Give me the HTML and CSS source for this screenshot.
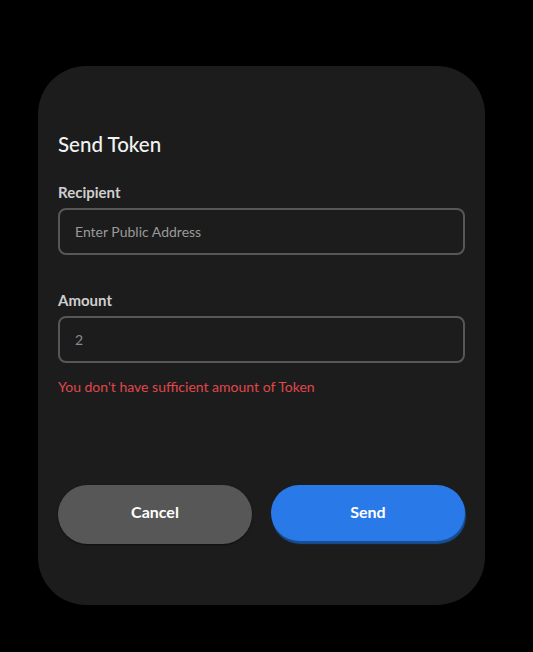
FILE: index.html
```html
<!DOCTYPE html>
<html>
<head>
<meta charset="utf-8">
<link rel="stylesheet" href="styles.css">
</head>
<body>
<div class="card">
  <h2 class="title">Send Token</h2>
  <div class="field">
    <label class="label">Recipient</label>
    <div class="input placeholder">Enter Public Address</div>
  </div>
  <div class="field field-amount">
    <label class="label">Amount</label>
    <div class="input value">2</div>
    <div class="error">You don't have sufficient amount of Token</div>
  </div>
  <div class="actions">
    <button class="btn btn-cancel">Cancel</button>
    <button class="btn btn-send">Send</button>
  </div>
</div>
</body>
</html>
```
FILE: styles.css
```css
html, body {
  margin: 0;
  padding: 0;
  background: #000;
  font-family: "Lato", "Noto Sans", sans-serif;
}
body {
  padding: 66px 0 0 38px;
}
.card {
  box-sizing: border-box;
  width: 447px;
  height: 539px;
  background: #1c1c1c;
  border-radius: 48px;
  padding: 64px 20px 0 20px;
  display: flex;
  flex-direction: column;
}
.title {
  margin: 0;
  font-size: 20.5px;
  font-weight: 500;
  line-height: 28px;
  color: #f2f2f2;
}
.field {
  display: flex;
  flex-direction: column;
  margin-top: 24px;
}
.field-amount {
  margin-top: 35px;
}
.label {
  font-size: 15px;
  font-weight: 700;
  line-height: 20px;
  color: #cfcfcf;
  margin-bottom: 6px;
}
.input {
  box-sizing: border-box;
  height: 47px;
  border: 2px solid #575757;
  border-radius: 8px;
  padding: 0 15px;
  display: flex;
  align-items: center;
  font-size: 14px;
}
.placeholder { color: #9a9a9a; }
.value { color: #8a8a8a; }
.error {
  margin-top: 15px;
  font-size: 14px;
  line-height: 18px;
  color: #e0474c;
}
.actions {
  display: flex;
  align-items: flex-start;
  gap: 19px;
  margin-top: 89px;
}
.btn {
  flex: 1;
  height: 56px;
  padding: 0 0 3px 0;
  border: none;
  border-radius: 30px;
  font-family: inherit;
  font-size: 16px;
  font-weight: 700;
  color: #fff;
  cursor: pointer;
}
.btn-cancel {
  height: 59px;
  padding-bottom: 6px;
  background: #575757;
  box-shadow: 0 1px 2px rgba(0,0,0,0.5);
}
.btn-send {
  background: #2a79e9;
  box-shadow: 1px 3px 1px #164f94;
}
```
